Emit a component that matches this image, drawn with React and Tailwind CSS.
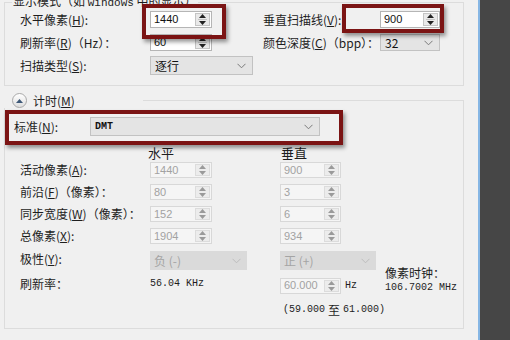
import React from "react";

const Tri = ({ up, color }) => (
  <svg width="7" height="4" viewBox="0 0 7 4" className="block">
    <path d={up ? "M0 4 L3.5 0 L7 4Z" : "M0 0 L3.5 4 L7 0Z"} fill={color} />
  </svg>
);

const Chevron = ({ color }) => (
  <svg width="9" height="6" viewBox="0 0 9 6" className="block">
    <path d="M0.5 0.8 L4.5 4.8 L8.5 0.8" fill="none" stroke={color} strokeWidth="1" />
  </svg>
);

function Spin({ value, w, disabled }) {
  if (disabled) {
    return (
      <div className={`flex h-[16px] ${w} border border-[#d8d8d8] bg-[#f5f5f5]`}>
        <div className="flex-1 pl-[3px] flex items-center text-[11px] text-[#a2a2a2] font-['Liberation_Sans',sans-serif]">
          {value}
        </div>
        <div className="w-[15px] my-[1px] mr-[1px] border border-[#dcdcdc] bg-[#ececec] flex flex-col items-center justify-center gap-[2px]">
          <Tri up color="#9a9a9a" />
          <Tri color="#9a9a9a" />
        </div>
      </div>
    );
  }
  return (
    <div className={`flex h-[17px] ${w} border border-[#b5b5b5] bg-white`}>
      <div className="flex-1 pl-[3px] flex items-center text-[11px] text-[#111] font-['Liberation_Sans',sans-serif]">
        {value}
      </div>
      <div className="w-[15px] my-[1px] mr-[1px] border border-[#c4c4c4] bg-[#e9e9e9] flex flex-col items-center justify-center gap-[1px]">
        <Tri up color="#222" />
        <div className="w-[9px] h-px bg-[#c4c4c4]" />
        <Tri color="#222" />
      </div>
    </div>
  );
}

function Select({ value, w, h, disabled, mono }) {
  return (
    <div
      className={`flex items-center justify-between ${w} ${h} pl-[4px] pr-[6px] ${
        disabled ? "bg-[#dadada] text-[#a4a4a4]" : "bg-[#e4e4e4] border border-[#c2c2c2] text-[#111]"
      }`}
    >
      <span className={mono ? "font-['Liberation_Mono',monospace] font-bold text-[10px]" : "text-[12px]"}>{value}</span>
      <Chevron color={disabled ? "#bdbdbd" : "#7a7a7a"} />
    </div>
  );
}

const U = ({ c }) => <span className="underline">{c}</span>;

const RedBox = ({ cls }) => (
  <div className={`absolute border-[4px] border-[#7b1414] shadow-[2px_3px_4px_rgba(0,0,0,0.4)] ${cls}`} />
);

export default function App() {
  return (
    <div className="w-[510px] h-[340px] flex overflow-hidden bg-[#f0f0f0] font-['Noto_Sans_CJK_SC',sans-serif] text-[12px] text-[#1e1e1e] leading-none">
      <div className="relative w-[478px] h-full">
        {/* Display mode group */}
        <div className="relative ml-[4px] mt-[2px] w-[460px] h-[84px] border border-[#dcdcdc] pt-[5px] pl-[15px]">
          <div className="absolute left-[7px] -top-[8px] px-[1px] bg-[#f0f0f0] text-[12px] whitespace-nowrap">
            显示模式（如 <span className="font-['Liberation_Mono',monospace] text-[11px]">windows</span> 中的显示）
          </div>
          <div className="grid grid-cols-[130px_113px_117px_60px] items-center h-[23px]">
            <span>水平像素(<U c="H" />):</span>
            <Spin value="1440" w="w-[62px]" />
            <span>垂直扫描线(<U c="V" />):</span>
            <Spin value="900" w="w-[60px]" />
          </div>
          <div className="grid grid-cols-[130px_113px_117px_60px] items-center h-[23px]">
            <span>刷新率(<U c="R" />)（Hz）：</span>
            <Spin value="60" w="w-[62px]" />
            <span>颜色深度(<U c="C" />)（bpp）：</span>
            <Select value="32" w="w-[60px]" h="h-[17px]" />
          </div>
          <div className="grid grid-cols-[130px_113px_117px_60px] items-center h-[23px]">
            <span>扫描类型(<U c="S" />):</span>
            <Select value="逐行" w="w-[103px]" h="h-[19px]" />
          </div>
        </div>

        {/* Timing section */}
        <div className="ml-[4px] w-[460px]">
          <div className="flex h-[15px] mt-[7px]">
            <div className="w-[139px] flex items-center">
              <div className="ml-[8px] w-[15px] h-[15px] rounded-full border border-[#a9a9a9] bg-gradient-to-b from-white to-[#dedede] flex items-center justify-center">
                <Tri up color="#3d5877" />
              </div>
              <span className="ml-[6px]">计时(<U c="M" />)</span>
            </div>
            <div className="flex-1 mt-[7px] border-t border-r border-[#dcdcdc]" />
          </div>
          <div className="h-[221px] border-l border-r border-b border-[#dcdcdc] pt-[9px]">
            <div className="flex items-center h-[19px]">
              <span className="w-[85px] pl-[9px]">标准(<U c="N" />):</span>
              <Select value="DMT" w="w-[230px]" h="h-[19px]" mono />
            </div>
            <div className="grid grid-cols-[130px_130px_1fr] items-center h-[14px] mt-[9px] pl-[15px] text-[13px]">
              <span />
              <span className="-ml-[2px]">水平</span>
              <span className="ml-[1px]">垂直</span>
            </div>
            {[
              [<span>活动像素(<U c="A" />):</span>, "1440", "900"],
              [<span>前沿(<U c="F" />)（像素）：</span>, "80", "3"],
              [<span>同步宽度(<U c="W" />)（像素）：</span>, "152", "6"],
              [<span>总像素(<U c="X" />):</span>, "1904", "934"],
            ].map(([label, a, b], i) => (
              <div key={i} className="grid grid-cols-[130px_130px_1fr] items-center h-[22px] pl-[15px]">
                {label}
                <Spin value={a} w="w-[62px]" disabled />
                <Spin value={b} w="w-[61px]" disabled />
              </div>
            ))}
            <div className="grid grid-cols-[130px_130px_1fr] items-center h-[21px] mt-[3px] pl-[15px]">
              <span className="-mt-[3px]">极性(<U c="Y" />):</span>
              <Select value="负 (-)" w="w-[97px]" h="h-[19px]" disabled />
              <Select value="正 (+)" w="w-[96px]" h="h-[19px]" disabled />
            </div>
            <div className="grid grid-cols-[130px_130px_105px_1fr] items-center h-[29px] pl-[15px]">
              <span className="-mt-[3px]">刷新率：</span>
              <span className="-mt-[3px] font-['Liberation_Mono',monospace] text-[10px]">56.04 KHz</span>
              <div className="flex items-center">
                <Spin value="60.000" w="w-[61px]" disabled />
                <span className="ml-[4px] font-['Liberation_Mono',monospace] text-[10px]">Hz</span>
              </div>
              <div className="flex flex-col gap-[4px] -mt-[12px]">
                <span>像素时钟：</span>
                <span className="font-['Liberation_Mono',monospace] text-[10px] whitespace-nowrap">106.7002 MHz</span>
              </div>
            </div>
            <div className="flex items-center h-[20px] pl-[278px] font-['Liberation_Mono',monospace] text-[10px] whitespace-nowrap">
              (59.000 <span className="font-['Noto_Sans_CJK_SC',sans-serif] text-[12px] mx-[3px]">至</span> 61.000)
            </div>
          </div>
        </div>

        <RedBox cls="left-[142px] top-[4px] w-[84px] h-[35px]" />
        <RedBox cls="left-[342px] top-[4px] w-[102px] h-[29px]" />
        <RedBox cls="left-[5px] top-[110px] w-[338px] h-[35px]" />
      </div>
      <div className="w-[2px] bg-[#86b6e4]" />
      <div className="flex-1 bg-[#464646]" />
    </div>
  );
}
